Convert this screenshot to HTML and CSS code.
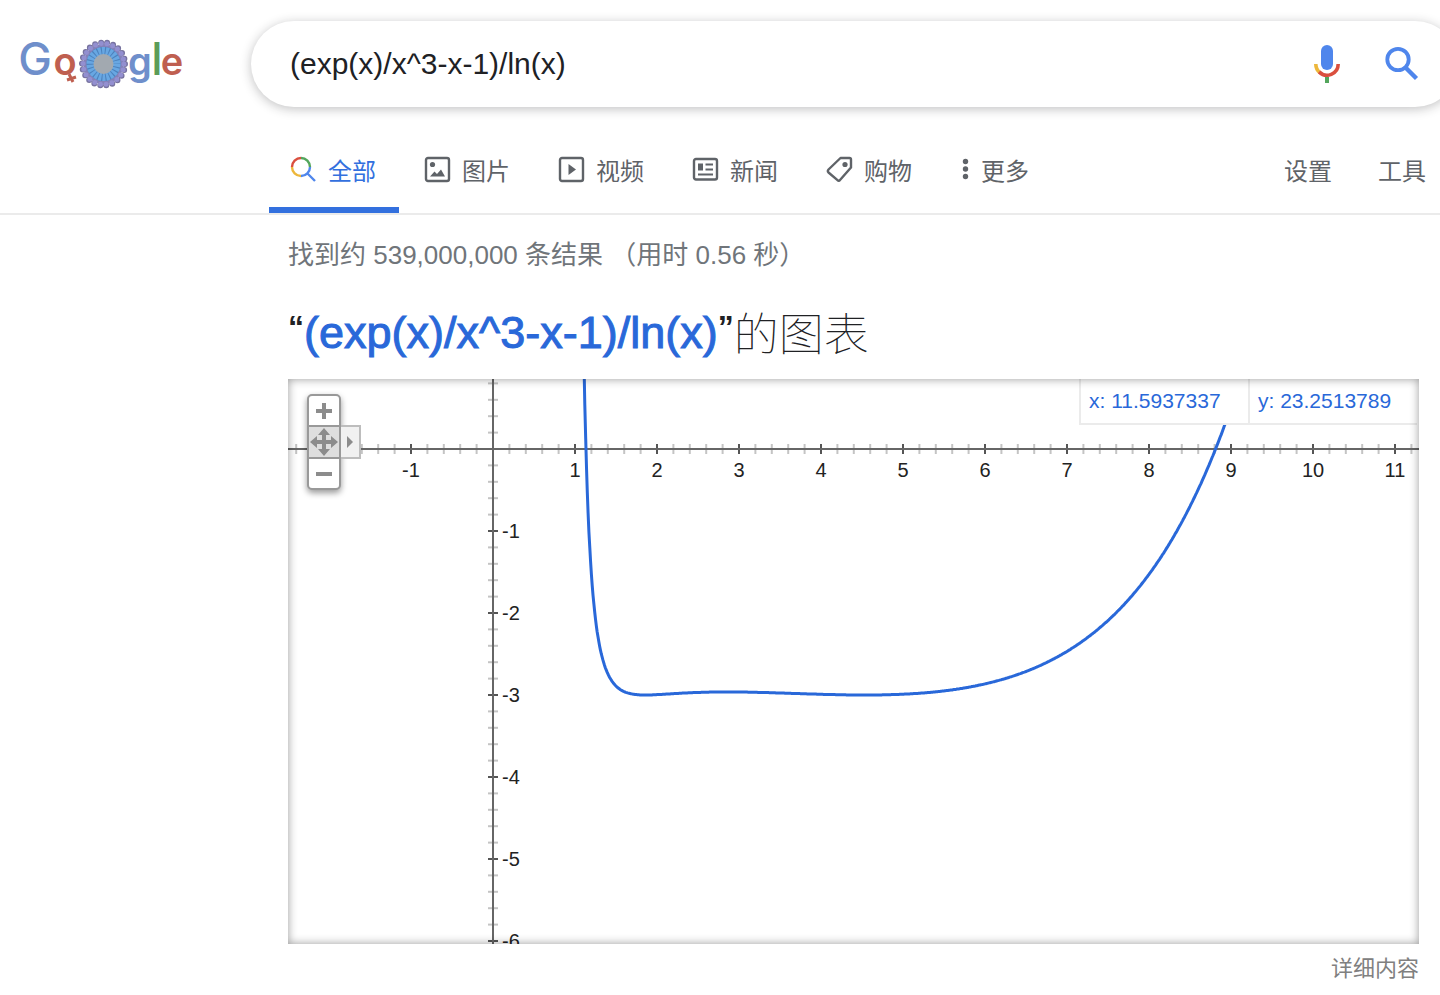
FILE: index.html
```
<!DOCTYPE html>
<html lang="zh-CN">
<head>
    <meta charset="UTF-8">
    <meta name="viewport" content="width=device-width, initial-scale=1.0">
    <title>(exp(x)/x^3-x-1)/ln(x) - Google 搜索</title>
    <link rel="stylesheet" href="styles.css">
</head>
<body>

<!-- Search header -->
<header class="header">
    <a class="logo" href="#" aria-label="Google">
        <svg width="170" height="72" viewBox="0 0 170 72">
            <g class="logo-text">
                <text class="logo-cap" x="17" y="47" fill="#6f8fcb">G</text>
                <text x="47" y="47" fill="#bf5f50">o</text>
                <text x="122" y="47" fill="#6f8fcb">g</text>
                <text class="logo-cap" x="139" y="47" fill="#5c9c58">l</text>
                <text x="154" y="47" fill="#bf5f50">e</text>
            </g>
            <path d="M51 46l4 8M49 52l9-3" stroke="#bf5f50" stroke-width="3"/>
            <circle cx="85.500" cy="36" r="20" fill="#8481b8"/>
            <circle cx="85.500" cy="36" r="21.500" fill="none" stroke="#77739f" stroke-width="6" stroke-linecap="round" stroke-dasharray="0 6.140"/>
            <circle cx="85.500" cy="36" r="20.500" fill="none" stroke="#938fd0" stroke-width="5" stroke-linecap="round" stroke-dasharray="0 5.855"/>
            <circle cx="85.500" cy="36" r="17" fill="#4c82bd"/>
            <circle cx="85.500" cy="36" r="13" fill="none" stroke="#68a7e2" stroke-width="8" stroke-dasharray="2.700 1.014"/>
            <circle cx="85.500" cy="36" r="10" fill="#a2a9b0"/>
        </svg>
    </a>
    <form class="search-bar" onsubmit="return false">
        <input class="search-input" type="text" aria-label="搜索" value="(exp(x)/x^3-x-1)/ln(x)">
        <button class="icon-btn" type="button" aria-label="语音搜索">
            <svg width="40" height="40" viewBox="0 0 40 40" fill="none">
                <rect x="14" y="1" width="12" height="25" rx="6" fill="#4f86ec"/>
                <path d="M8.8 20a11.2 11.2 0 0 0 4 8.6" stroke="#edb73b" stroke-width="3.6"/>
                <path d="M12.1 27.9A11.2 11.2 0 0 0 31.2 20" stroke="#da4f3e" stroke-width="3.6"/>
                <path d="M20 33v6" stroke="#53a65c" stroke-width="4"/>
            </svg>
        </button>
        <button class="icon-btn" type="submit" aria-label="Google 搜索">
            <svg width="40" height="40" viewBox="0 0 40 40" fill="none" stroke="#4f86ec">
                <circle cx="16" cy="15.5" r="10.7" stroke-width="3.8"/>
                <path d="M24 24L34.5 34.5" stroke-width="4.4"/>
            </svg>
        </button>
    </form>
</header>

<!-- Result type tabs -->
<nav class="nav">
    <div class="tabs">
        <a class="tab active" href="#">
            <svg width="28" height="28" viewBox="0 0 28 28" fill="none" stroke-width="2.4">
                <path d="M3 12A9 9 0 0 1 12 3" stroke="#da4f3e"/>
                <path d="M12 3A9 9 0 0 1 21 12" stroke="#53a65c"/>
                <path d="M3 12A9 9 0 0 0 12 21" stroke="#edb73b"/>
                <path d="M21 12A9 9 0 0 1 12 21M18 18L26 26" stroke="#4f86ec"/>
            </svg>
            全部
        </a>
        <a class="tab" href="#">
            <svg width="28" height="28" viewBox="0 0 28 28">
                <rect x="3" y="3" width="23" height="23" rx="2" fill="none" stroke="#5f6368" stroke-width="2.4"/>
                <circle cx="9.5" cy="9.5" r="2.6" fill="#5f6368"/>
                <path d="M7 21.5l4.5-5 2.5 2.5 4-4.5 4 7z" fill="#5f6368"/>
            </svg>
            图片
        </a>
        <a class="tab" href="#">
            <svg width="28" height="28" viewBox="0 0 28 28">
                <rect x="3" y="3" width="23" height="23" rx="2" fill="none" stroke="#5f6368" stroke-width="2.4"/>
                <path d="M11.5 9v11l7.5-5.5z" fill="#5f6368"/>
            </svg>
            视频
        </a>
        <a class="tab" href="#">
            <svg width="28" height="28" viewBox="0 0 28 28" fill="none" stroke="#5f6368">
                <rect x="3" y="4" width="23" height="20.5" rx="2" stroke-width="2.4"/>
                <rect x="7" y="8.5" width="5" height="7" fill="#5f6368" stroke="none"/>
                <path d="M14.5 9.5H22M14.5 14.5H22M7 19.5H22" stroke-width="2"/>
            </svg>
            新闻
        </a>
        <a class="tab" href="#">
            <svg width="28" height="28" viewBox="0 0 28 28" fill="none" stroke="#5f6368">
                <path d="M15.5 3H24.5Q26 3 26 4.5V12.5L15 25Q13.8 26.5 12.5 25.2L3.500 17.500Q2.200 16 3.500 14.500z" stroke-width="2.4" stroke-linejoin="round"/>
                <circle cx="20" cy="9.5" r="2.6" fill="#5f6368"  stroke="none"/>
            </svg>
            购物
        </a>
        <a class="tab more" href="#">
            <svg width="14" height="28" viewBox="0 0 14 28" fill="#5f6368">
                <circle cx="6.5" cy="6.5" r="2.7"/>
                <circle cx="6.5" cy="14" r="2.7"/>
                <circle cx="6.5" cy="21.500" r="2.7"/>
            </svg>
            更多
        </a>
    </div>
    <div class="tools">
        <button type="button">设置</button>
        <button type="button">工具</button>
    </div>
</nav>

<!-- Results -->
<main class="results">
    <p class="stats">找到约 539,000,000 条结果 （用时 0.56 秒）</p>
    <h1 class="title"><b>“</b><a href="#">(exp(x)/x^3-x-1)/ln(x)</a><b>”</b><span>的图表</span></h1>

    <div class="graph">
        <svg class="plot" id="plot" viewBox="0 0 1131 565" role="img" aria-label="函数图表"></svg>
        <div class="readout">
            <span>x: 11.5937337</span>
            <span>y: 23.2513789</span>
        </div>
        <div class="zoom">
            <div class="zoom-stack">
                <button type="button" aria-label="放大">
                    <svg width="16" height="16" viewBox="0 0 16 16"><path d="M8 0v16M0 8h16" stroke="#8c8c8c" stroke-width="4"/></svg>
                </button>
                <button class="pan" type="button" aria-label="平移">
                    <svg width="28" height="28" viewBox="0 0 28 28" fill="#8c8c8c">
                        <path d="M14 0l6 7h-4v5h5V8l7 6-7 6v-4h-5v5h4l-6 7-6-7h4v-5H7v4l-7-6 7-6v4h5V7H8z"/>
                    </svg>
                </button>
                <button type="button" aria-label="缩小">
                    <svg width="16" height="16" viewBox="0 0 16 16"><path d="M0 8h16" stroke="#8c8c8c" stroke-width="4"/></svg>
                </button>
            </div>
            <button class="expand" type="button" aria-label="展开">
                <svg width="6" height="12" viewBox="0 0 6 12"><path d="M0 0l6 6-6 6z" fill="#8c8c8c"/></svg>
            </button>
        </div>
    </div>

    <a class="details" href="#">详细内容</a>
</main>

<script src="graph.js"></script>
</body>
</html>
```
FILE: styles.css
```
/* General Styling */
* {
    box-sizing: border-box;
}
body {
    margin: 0;
    font-family: "Liberation Sans", Arial, "Noto Sans CJK SC", sans-serif;
    background: #ffffff;
    color: #202124;
    overflow-x: hidden;
}
a {
    text-decoration: none;
}
button {
    padding: 0;
    border: none;
    background: none;
    font-family: inherit;
    cursor: pointer;
}
svg {
    display: block;
    flex: none;
}

/* Header */
.header {
    display: flex;
    align-items: center;
    padding-top: 21px;
}
.logo {
    width: 251px;
    flex: none;
    padding-left: 18px;
}
.logo-text {
    font-family: Inter, sans-serif;
    font-size: 38px;
    font-weight: 600;
    text-anchor: middle;
}
.logo-cap {
    font-size: 45px;
    font-weight: 500;
}
.search-bar {
    flex: 1;
    display: flex;
    align-items: center;
    gap: 35px;
    height: 86px;
    margin-right: -18px;
    padding: 0 36px 0 39px;
    border-radius: 43px;
    background: #ffffff;
    box-shadow: 0 2px 11px rgba(32, 33, 36, 0.28);
}
.search-input {
    flex: 1;
    min-width: 0;
    padding: 0;
    border: none;
    outline: none;
    background: none;
    font-family: inherit;
    font-size: 30px;
    color: #202124;
}

/* Tabs */
.nav {
    display: flex;
    justify-content: space-between;
    margin-top: 20px;
    padding: 0 14px 0 269px;
    border-bottom: 2px solid #ebebeb;
}
.tabs {
    display: flex;
    gap: 4px;
}
.tab {
    display: flex;
    align-items: center;
    gap: 11px;
    height: 86px;
    padding: 0 23px 0 20px;
    border-bottom: 6px solid transparent;
    border-top: 4px solid transparent;
    font-size: 24px;
    white-space: nowrap;
    color: #5f6368;
}
.tab.active {
    color: #3370de;
    border-bottom-color: #3370de;
}
.tab.more {
    gap: 8px;
}
.tools {
    display: flex;
    gap: 46px;
    padding-bottom: 2px;
}
.tools button {
    font-size: 24px;
    white-space: nowrap;
    color: #5f6368;
}

/* Results */
.results {
    padding: 20px 21px 8px 288px;
}
.stats {
    margin: 0;
    font-size: 26px;
    line-height: 40px;
    color: #70757a;
}
.title {
    margin: 28px 0 16px;
    font-size: 45px;
    font-weight: 400;
    line-height: 60px;
    white-space: nowrap;
}
.title b {
    font-size: 32px;
    vertical-align: 10px;
    line-height: 1;
}
.title a {
    color: #2968d9;
    -webkit-text-stroke: 1px #2968d9;
}
.title span {
    font-family: "Noto Sans CJK SC", sans-serif;
    font-weight: 100;
    line-height: 1;
    vertical-align: -3px;
}
.details {
    display: block;
    margin-top: 9px;
    font-size: 22px;
    line-height: 32px;
    text-align: right;
    color: #808080;
}

/* Graph */
.graph {
    position: relative;
    overflow: hidden;
}
.graph::after {
    content: "";
    position: absolute;
    inset: 0;
    box-shadow: inset 0 0 10px rgba(0, 0, 0, 0.4);
    pointer-events: none;
}
.plot {
    width: 100%;
    height: auto;
}
.axis {
    stroke: #666666;
    stroke-width: 2;
}
.tick {
    stroke: #c4c4c4;
    stroke-width: 2;
}
.tick.major {
    stroke: #555555;
}
.axis-label {
    font-size: 20px;
    fill: #222222;
}
.curve {
    fill: none;
    stroke: #2968d9;
    stroke-width: 3;
}
.readout {
    position: absolute;
    top: 0;
    right: 2px;
    display: flex;
    background: #ffffff;
    border-bottom: 2px solid #ebebeb;
    font-size: 21px;
    line-height: 44px;
    color: #2968d9;
}
.readout span {
    width: 169px;
    padding-left: 8px;
    border-left: 2px solid #ebebeb;
}

/* Zoom control */
.zoom {
    position: absolute;
    top: 15px;
    left: 19px;
    z-index: 1;
    display: flex;
    align-items: center;
}
.zoom-stack {
    width: 34px;
    border: 2px solid #999999;
    border-radius: 5px;
    background: #ffffff;
    box-shadow: 0 3px 6px rgba(0, 0, 0, 0.4);
}
.zoom button {
    display: flex;
    align-items: center;
    justify-content: center;
    width: 100%;
    height: 29px;
}
.zoom .pan {
    height: 34px;
    background: #dedede;
    border: solid #999999;
    border-width: 2px 0;
}
.zoom .expand {
    width: 20px;
    height: 34px;
    border: 2px solid #bdbdbd;
    border-left: none;
    background: #f1f1f1;
}
```
FILE: graph.js
```
const plot = document.getElementById('plot');
const unit = 82;
const originX = 205;
const originY = 70;
const width = 1131;
const height = 565;

function f(x) {
    return (Math.exp(x) / Math.pow(x, 3) - x - 1) / Math.log(x);
}

function add(name, attrs, text) {
    const el = document.createElementNS('http://www.w3.org/2000/svg', name);
    for (const key in attrs) {
        el.setAttribute(key, attrs[key]);
    }
    if (text) {
        el.textContent = text;
    }
    plot.appendChild(el);
}

function line(x1, y1, x2, y2, className) {
    add('line', { x1: x1, y1: y1, x2: x2, y2: y2, class: className });
}

// five ticks per unit, every fifth one is labelled
for (let i = -12; i <= 56; i++) {
    const x = originX + i * unit / 5;
    const major = i % 5 === 0;
    line(x, originY - 5, x, originY + 5, major ? 'tick major' : 'tick');
    if (major && i !== 0) {
        add('text', { x: x, y: originY + 28, 'text-anchor': 'middle', class: 'axis-label' }, String(i / 5));
    }
}
for (let i = -30; i <= 4; i++) {
    const y = originY - i * unit / 5;
    const major = i % 5 === 0;
    line(originX - 5, y, originX + 5, y, major ? 'tick major' : 'tick');
    if (major && i !== 0) {
        add('text', { x: originX + 9, y: y + 7, class: 'axis-label' }, String(i / 5));
    }
}

line(0, originY, width, originY, 'axis');
line(originX, 0, originX, height, 'axis');

const points = [];
for (let x = 1.08; x <= 9.2; x += 0.01) {
    points.push((originX + x * unit).toFixed(1) + ',' + (originY - f(x) * unit).toFixed(1));
}
add('polyline', { points: points.join(' '), class: 'curve' });
```
